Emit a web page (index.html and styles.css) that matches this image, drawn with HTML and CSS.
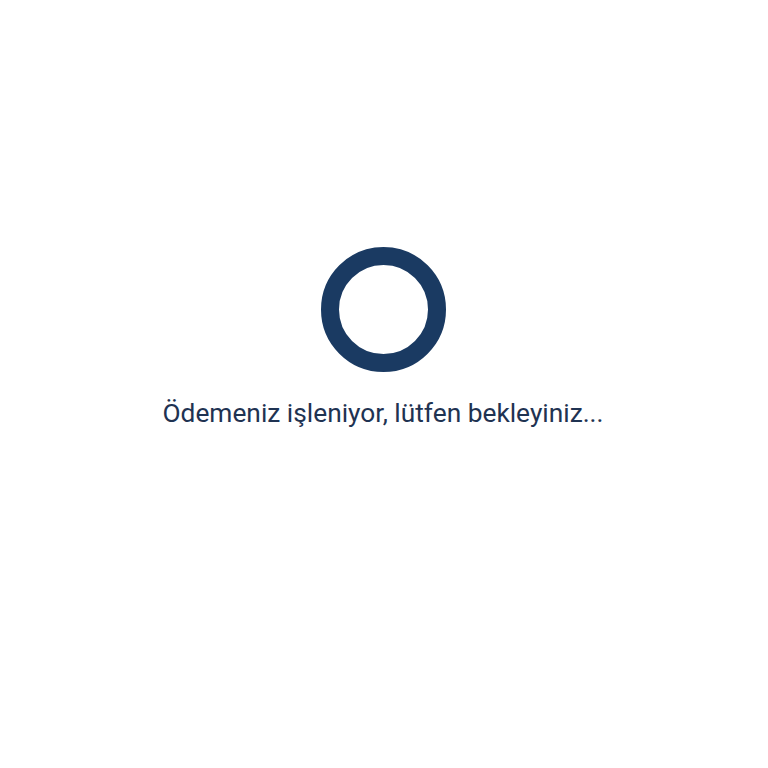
FILE: index.html
```html
<!DOCTYPE html>
<html lang="tr">
<head>
<meta charset="utf-8">
<link rel="stylesheet" href="styles.css">
</head>
<body>
<main class="loader">
  <div class="ring"></div>
  <p class="message">Ödemeniz işleniyor, lütfen bekleyiniz...</p>
</main>
</body>
</html>
```
FILE: styles.css
```css
html, body {
  margin: 0;
  padding: 0;
  background: #ffffff;
}
.loader {
  display: flex;
  flex-direction: column;
  align-items: center;
  padding-top: 247px;
  padding-right: 2px;
}
.ring {
  width: 125px;
  height: 125px;
  box-sizing: border-box;
  border: 18px solid #1a3a62;
  border-radius: 50%;
}
.message {
  margin: 24px 0 0;
  font-family: Roboto, "Liberation Sans", sans-serif;
  font-size: 26.3px;
  line-height: 34px;
  color: #1f3352;
}
```
